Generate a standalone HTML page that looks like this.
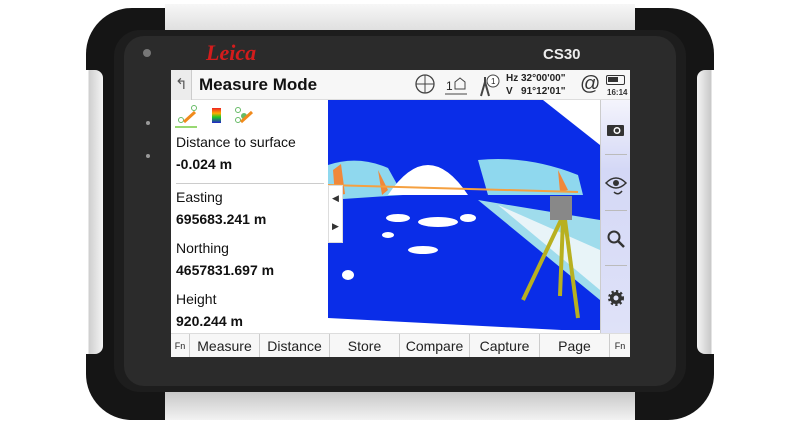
<!DOCTYPE html>
<html><head><meta charset="utf-8"><style>
*{margin:0;padding:0;box-sizing:border-box}
body{width:800px;height:428px;background:#fff;position:relative;overflow:hidden;font-family:"Liberation Sans",sans-serif}
.a{position:absolute}
.t{font-family:"Liberation Sans",sans-serif;color:#111;white-space:nowrap}
</style></head><body>
<!-- body -->
<div class="a" style="left:86px;top:8px;width:628px;height:412px;background:#151515;border-radius:46px"></div>
<!-- silver rails -->
<div class="a" style="left:165px;top:4px;width:470px;height:30px;background:linear-gradient(#f7f7f7,#dcdcdc)"></div>
<div class="a" style="left:165px;top:392px;width:470px;height:28px;background:linear-gradient(#c8c8c8,#f2f2f2)"></div>
<div class="a" style="left:84px;top:70px;width:19px;height:284px;background:linear-gradient(90deg,#fff 0,#fff 4px,#cfcfcf 5px,#f4f4f4);border-radius:0 8px 8px 0"></div>
<div class="a" style="left:697px;top:70px;width:19px;height:284px;background:linear-gradient(90deg,#f4f4f4,#c8c8c8 14px,#fff 15px);border-radius:8px 0 0 8px"></div>
<!-- bezel -->
<div class="a" style="left:114px;top:30px;width:572px;height:362px;background:#1d1d1d;border-radius:26px"></div>
<div class="a" style="left:124px;top:36px;width:552px;height:350px;background:#2b2b2b;border-radius:20px"></div>
<div class="a" style="left:143px;top:49px;width:8px;height:8px;border-radius:50%;background:#777"></div>
<div class="a" style="left:146px;top:121px;width:4px;height:4px;border-radius:50%;background:#999"></div>
<div class="a" style="left:146px;top:154px;width:4px;height:4px;border-radius:50%;background:#999"></div>
<div class="a t" style="left:206px;top:40px;font-family:'Liberation Serif',serif;font-style:italic;font-weight:bold;font-size:22px;color:#d31c1c">Leica</div>
<div class="a t" style="left:543px;top:46px;font-weight:bold;font-size:15px;color:#eee">CS30</div>
<!-- screen -->
<div class="a" style="left:171px;top:70px;width:459px;height:287px;background:#fff;overflow:hidden">
 <div class="a" style="left:0;top:0;width:459px;height:30px;background:#f7f7f7;border-bottom:1px solid #ddd"></div>
 <div class="a" style="left:0;top:0;width:21px;height:30px;background:#ececec;border-right:1px solid #ccc"></div>
 <div class="a t" style="left:4px;top:5px;font-size:15px;color:#555">↰</div>
 <div class="a t" style="left:28px;top:5px;font-weight:bold;font-size:17px">Measure Mode</div>
 <svg class="a" style="left:240px;top:2px" width="150" height="28">
  <circle cx="14" cy="12" r="9" fill="none" stroke="#444" stroke-width="1.3"/><line x1="14" y1="3" x2="14" y2="21" stroke="#444"/><line x1="5" y1="12" x2="23" y2="12" stroke="#444"/>
  <text x="35" y="18" font-size="12" font-family="Liberation Sans" fill="#222">1</text>
  <path d="M44 17V10l5-4 5 4v7z" fill="none" stroke="#444"/><line x1="34" y1="22" x2="56" y2="22" stroke="#444"/>
  <path d="M70 24l4-14 4 14M74 10V5" stroke="#444" fill="none" stroke-width="2"/>
  <circle cx="82" cy="9" r="6" fill="#fff" stroke="#444"/><text x="80" y="12" font-size="8" fill="#222" font-family="Liberation Sans">1</text>
 </svg>
 <div class="a t" style="left:335px;top:2px;font-weight:bold;font-size:10px;line-height:13px;color:#222">Hz 32°00'00"<br>V &nbsp;&nbsp;91°12'01"</div>
 <div class="a t" style="left:409px;top:3px;font-size:20px;color:#333">@</div>
 <div class="a" style="left:435px;top:5px;width:19px;height:10px;border:1.5px solid #333;border-radius:2px"><div style="margin:1px;width:10px;height:5px;background:#333"></div></div>
 <div class="a t" style="left:436px;top:18px;font-size:8px;font-weight:bold;color:#333">16:14</div>
 <!-- left panel -->
 <svg class="a" style="left:4px;top:34px" width="90" height="24">
  <circle cx="6" cy="16" r="2.5" fill="none" stroke="#6b6"/><circle cx="19" cy="4" r="2.5" fill="none" stroke="#6b6"/><line x1="9" y1="18" x2="20" y2="8" stroke="#f08a1c" stroke-width="3"/>
  <line x1="0" y1="23" x2="22" y2="23" stroke="#7c4" stroke-width="1.5"/>
  <rect x="37" y="4" width="9" height="15" fill="url(#g)"/>
  <defs><linearGradient id="g" x1="0" y1="0" x2="0" y2="1"><stop offset="0" stop-color="#e22"/><stop offset=".35" stop-color="#fa0"/><stop offset=".6" stop-color="#2c2"/><stop offset="1" stop-color="#22c"/></linearGradient></defs>
  <circle cx="63" cy="6" r="2.5" fill="none" stroke="#6b6"/><circle cx="63" cy="16" r="2.5" fill="none" stroke="#6b6"/><circle cx="69" cy="12" r="3" fill="#6b6"/><line x1="66" y1="18" x2="77" y2="8" stroke="#f08a1c" stroke-width="3"/>
 </svg>
 <div class="a t" style="left:5px;top:64px;font-size:14px">Distance to surface</div>
 <div class="a t" style="left:5px;top:86px;font-size:14px;font-weight:bold">-0.024 m</div>
 <div class="a" style="left:5px;top:113px;width:148px;height:1px;background:#ccc"></div>
 <div class="a t" style="left:5px;top:119px;font-size:14px">Easting</div>
 <div class="a t" style="left:5px;top:141px;font-size:14px;font-weight:bold">695683.241 m</div>
 <div class="a t" style="left:5px;top:170px;font-size:14px">Northing</div>
 <div class="a t" style="left:5px;top:192px;font-size:14px;font-weight:bold">4657831.697 m</div>
 <div class="a t" style="left:5px;top:221px;font-size:14px">Height</div>
 <div class="a t" style="left:5px;top:243px;font-size:14px;font-weight:bold">920.244 m</div>
 <!-- map -->
 <svg class="a" style="left:157px;top:30px" width="272" height="234">
  <rect width="272" height="230" fill="#0a2de8"/>
  <path d="M0 218L272 232V234H0z" fill="#fff"/>
  <path d="M215 0H272V45z" fill="#fff"/>
  <path d="M272 120L150 100 272 200z" fill="#9fdcec"/>
  <path d="M272 150L170 105 272 190z" fill="#e8f4f8"/>
  <path d="M0 65Q30 55 60 68L75 95 0 100z" fill="#8fd8ee"/>
  <path d="M150 60Q200 55 250 75L255 95 160 95z" fill="#8fd8ee"/>
  <path d="M5 70l8 -6 4 30-10 2zM50 70l10 20-6 5zM230 70l10 20-8 2z" fill="#f0883a"/>
  <path d="M60 95Q100 35 140 95z" fill="#fff"/>
  <path d="M0 85L250 92" stroke="#f5a040" stroke-width="2"/>
  <g fill="#fff"><ellipse cx="110" cy="122" rx="20" ry="5"/><ellipse cx="95" cy="150" rx="15" ry="4"/><ellipse cx="70" cy="118" rx="12" ry="4"/><ellipse cx="140" cy="118" rx="8" ry="4"/><ellipse cx="20" cy="175" rx="6" ry="5"/><ellipse cx="60" cy="135" rx="6" ry="3"/></g>
  <g stroke="#b8b020" stroke-width="4"><line x1="233" y1="120" x2="195" y2="200"/><line x1="235" y1="120" x2="232" y2="196"/><line x1="237" y1="120" x2="250" y2="218"/></g>
  <rect x="222" y="96" width="22" height="24" fill="#888"/>
 </svg>
 <div class="a" style="left:157px;top:115px;width:15px;height:58px;background:#fff;border:1px solid #ddd"></div>
 <div class="a t" style="left:161px;top:123px;font-size:9px;color:#333">◀</div>
 <div class="a t" style="left:161px;top:151px;font-size:9px;color:#333">▶</div>
 <!-- toolbar -->
 <div class="a" style="left:429px;top:30px;width:30px;height:233px;background:linear-gradient(#f4f4fc,#d4d8f6 30%,#dfe2f8);border-left:1px solid #ccc"></div>
 <div class="a" style="left:434px;top:84px;width:22px;height:1px;background:#bbb"></div>
 <div class="a" style="left:434px;top:140px;width:22px;height:1px;background:#bbb"></div>
 <div class="a" style="left:434px;top:195px;width:22px;height:1px;background:#bbb"></div>
 <svg class="a" style="left:433px;top:50px" width="24" height="240">
  <rect x="3" y="5" width="17" height="11" rx="1" fill="#333"/><circle cx="13" cy="10.5" r="3.5" fill="#fff"/><circle cx="13" cy="10.5" r="2" fill="#333"/>
  <path d="M2 63q10-10 20 0q-10 10-20 0z" fill="none" stroke="#333" stroke-width="1.5"/><circle cx="12" cy="63" r="3" fill="#333"/><path d="M10 72q4 4 8-1" fill="none" stroke="#333" stroke-width="1.5"/>
  <circle cx="10" cy="117" r="5.5" fill="none" stroke="#333" stroke-width="2"/><line x1="14" y1="121" x2="20" y2="127" stroke="#333" stroke-width="2.5"/>
  <circle cx="12" cy="178" r="6" fill="#333" stroke="#333" stroke-width="4" stroke-dasharray="2 2"/><circle cx="12" cy="178" r="2.5" fill="#dfe2f8"/>
 </svg>
 <!-- softkeys -->
 <div class="a" style="left:0;top:263px;width:459px;height:24px;background:#f7f7f7;border-top:1px solid #ddd;display:flex;font-size:14px;color:#222">
  <div style="width:19px;text-align:center;font-size:9px;line-height:24px;border-right:1px solid #ccc">Fn</div>
  <div style="width:70px;text-align:center;line-height:24px;border-right:1px solid #ccc">Measure</div>
  <div style="width:70px;text-align:center;line-height:24px;border-right:1px solid #ccc">Distance</div>
  <div style="width:70px;text-align:center;line-height:24px;border-right:1px solid #ccc">Store</div>
  <div style="width:70px;text-align:center;line-height:24px;border-right:1px solid #ccc">Compare</div>
  <div style="width:70px;text-align:center;line-height:24px;border-right:1px solid #ccc">Capture</div>
  <div style="width:70px;text-align:center;line-height:24px;border-right:1px solid #ccc">Page</div>
  <div style="width:20px;text-align:center;font-size:9px;line-height:24px">Fn</div>
 </div>
</div>
</body></html>
